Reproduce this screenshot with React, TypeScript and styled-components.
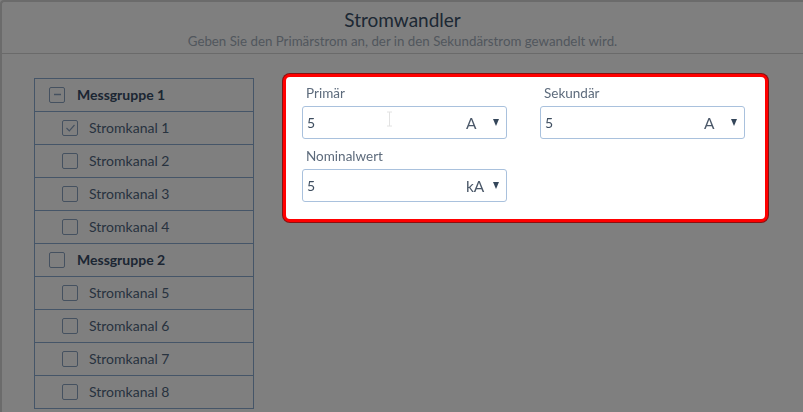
import React from "react";
import styled, { createGlobalStyle } from "styled-components";

const GlobalStyle = createGlobalStyle`
  html, body { margin: 0; padding: 0; background: #ffffff; overflow: hidden; }
  body { font-family: "Lato", "Open Sans", sans-serif; }
  * { box-sizing: border-box; }
`;

const Frame = styled.div`
  width: 830px;
  height: 412px;
  border-left: 2px solid #d6d6d6;
  border-top: 2px solid #d6d6d6;
  border-top-left-radius: 4px;
  background: #ffffff;
  overflow: hidden;
`;

const Header = styled.header`
  width: 801px;
  height: 52px;
  border-bottom: 1px solid #d4d4d4;
  display: flex;
  flex-direction: column;
  align-items: center;
  padding-top: 6px;
`;

const Title = styled.h1`
  margin: 0;
  font-size: 19px;
  font-weight: 400;
  line-height: 24px;
  color: #3a5068;
`;

const Subtitle = styled.p`
  margin: 0;
  font-size: 13.3px;
  line-height: 18px;
  color: #a3aebb;
`;

const Content = styled.main`
  display: flex;
  align-items: flex-start;
  padding: 20px 0 0 32px;
`;

const List = styled.ul`
  list-style: none;
  margin: 4px 0 0 0;
  padding: 0;
  width: 220px;
  border: 1px solid #8aaad0;
  border-bottom: none;
`;

const Row = styled.li<{ $level: number }>`
  display: flex;
  align-items: center;
  height: 33px;
  border-bottom: 1px solid #8aaad0;
  padding-left: ${(p) => (p.$level === 0 ? 14 : 27)}px;
  padding-bottom: 2px;
  gap: ${(p) => (p.$level === 0 ? 12 : 11)}px;
  font-size: 14px;
  font-weight: ${(p) => (p.$level === 0 ? 700 : 400)};
  color: ${(p) => (p.$level === 0 ? "#384c66" : "#50667e")};
`;

const Box = styled.span`
  width: 16px;
  height: 16px;
  border: 1.5px solid #8aa2c0;
  border-radius: 2px;
  display: flex;
  align-items: center;
  justify-content: center;
  flex: none;
  margin-top: 1px;
`;

const Overlay = styled.div`
  position: fixed;
  inset: 0;
  background: rgba(0, 0, 0, 0.5);
  z-index: 10;
  pointer-events: none;
`;

const Panel = styled.section`
  position: relative;
  z-index: 20;
  margin-left: 29px;
  width: 485px;
  height: 148px;
  background: #ffffff;
  border: 3px solid #ff0000;
  border-radius: 7px;
  box-shadow: 0 0 0 1px #8a1010;
  padding: 6px 20px 0 16px;
  display: grid;
  grid-template-columns: 205px 205px;
  column-gap: 33px;
  row-gap: 7px;
  align-content: start;
`;

const Field = styled.div`
  display: flex;
  flex-direction: column;
  gap: 3px;
`;

const Label = styled.label`
  height: 20px;
  line-height: 20px;
  padding-left: 4px;
  font-size: 13.5px;
  color: #5d6b7c;
`;

const InputBox = styled.div`
  height: 33px;
  border: 1px solid #a9c1dd;
  border-radius: 3px;
  display: flex;
  align-items: center;
  padding: 0 7px 0 4px;
`;

const Value = styled.span`
  flex: 1;
  font-size: 14px;
  color: #3d4d5f;
`;

const Unit = styled.span`
  width: 27px;
  font-size: 15.5px;
  color: #4b5869;
`;

const Caret = styled.span`
  width: 0;
  height: 0;
  border-left: 3.5px solid transparent;
  border-right: 3.5px solid transparent;
  border-top: 7px solid #34465a;
`;

const Cursor = styled.svg`
  position: absolute;
  left: 100px;
  top: 34px;
`;

const groups = [
  { name: "Messgruppe 1", state: "partial", channels: [1, 2, 3, 4] },
  { name: "Messgruppe 2", state: "none", channels: [5, 6, 7, 8] },
];

function Minus() {
  return (
    <svg width="9" height="9" viewBox="0 0 9 9">
      <line x1="1" y1="4.5" x2="8" y2="4.5" stroke="#8aa2c0" strokeWidth="1.3" />
    </svg>
  );
}

function Check() {
  return (
    <svg width="11" height="10" viewBox="0 0 11 10">
      <polyline points="1.5,5 4.3,7.8 9.5,2" fill="none" stroke="#8aa2c0" strokeWidth="1.2" />
    </svg>
  );
}

function UnitField({ label, unit }: { label: string; unit: string }) {
  return (
    <Field>
      <Label>{label}</Label>
      <InputBox>
        <Value>5</Value>
        <Unit>{unit}</Unit>
        <Caret />
      </InputBox>
    </Field>
  );
}

export default function App() {
  return (
    <>
      <GlobalStyle />
      <Frame>
        <Header>
          <Title>Stromwandler</Title>
          <Subtitle>Geben Sie den Primärstrom an, der in den Sekundärstrom gewandelt wird.</Subtitle>
        </Header>
        <Content>
          <List>
            {groups.map((g) => (
              <React.Fragment key={g.name}>
                <Row $level={0}>
                  <Box>{g.state === "partial" ? <Minus /> : null}</Box>
                  {g.name}
                </Row>
                {g.channels.map((c) => (
                  <Row $level={1} key={c}>
                    <Box>{c === 1 ? <Check /> : null}</Box>
                    Stromkanal {c}
                  </Row>
                ))}
              </React.Fragment>
            ))}
          </List>
          <Panel>
            <UnitField label="Primär" unit="A" />
            <UnitField label="Sekundär" unit="A" />
            <UnitField label="Nominalwert" unit="kA" />
            <Cursor width="7" height="16" viewBox="0 0 7 16">
              <path d="M1 1h5M3.5 1v14M1 15h5" stroke="#e2e2e2" strokeWidth="1" fill="none" />
            </Cursor>
          </Panel>
        </Content>
      </Frame>
      <Overlay />
    </>
  );
}
